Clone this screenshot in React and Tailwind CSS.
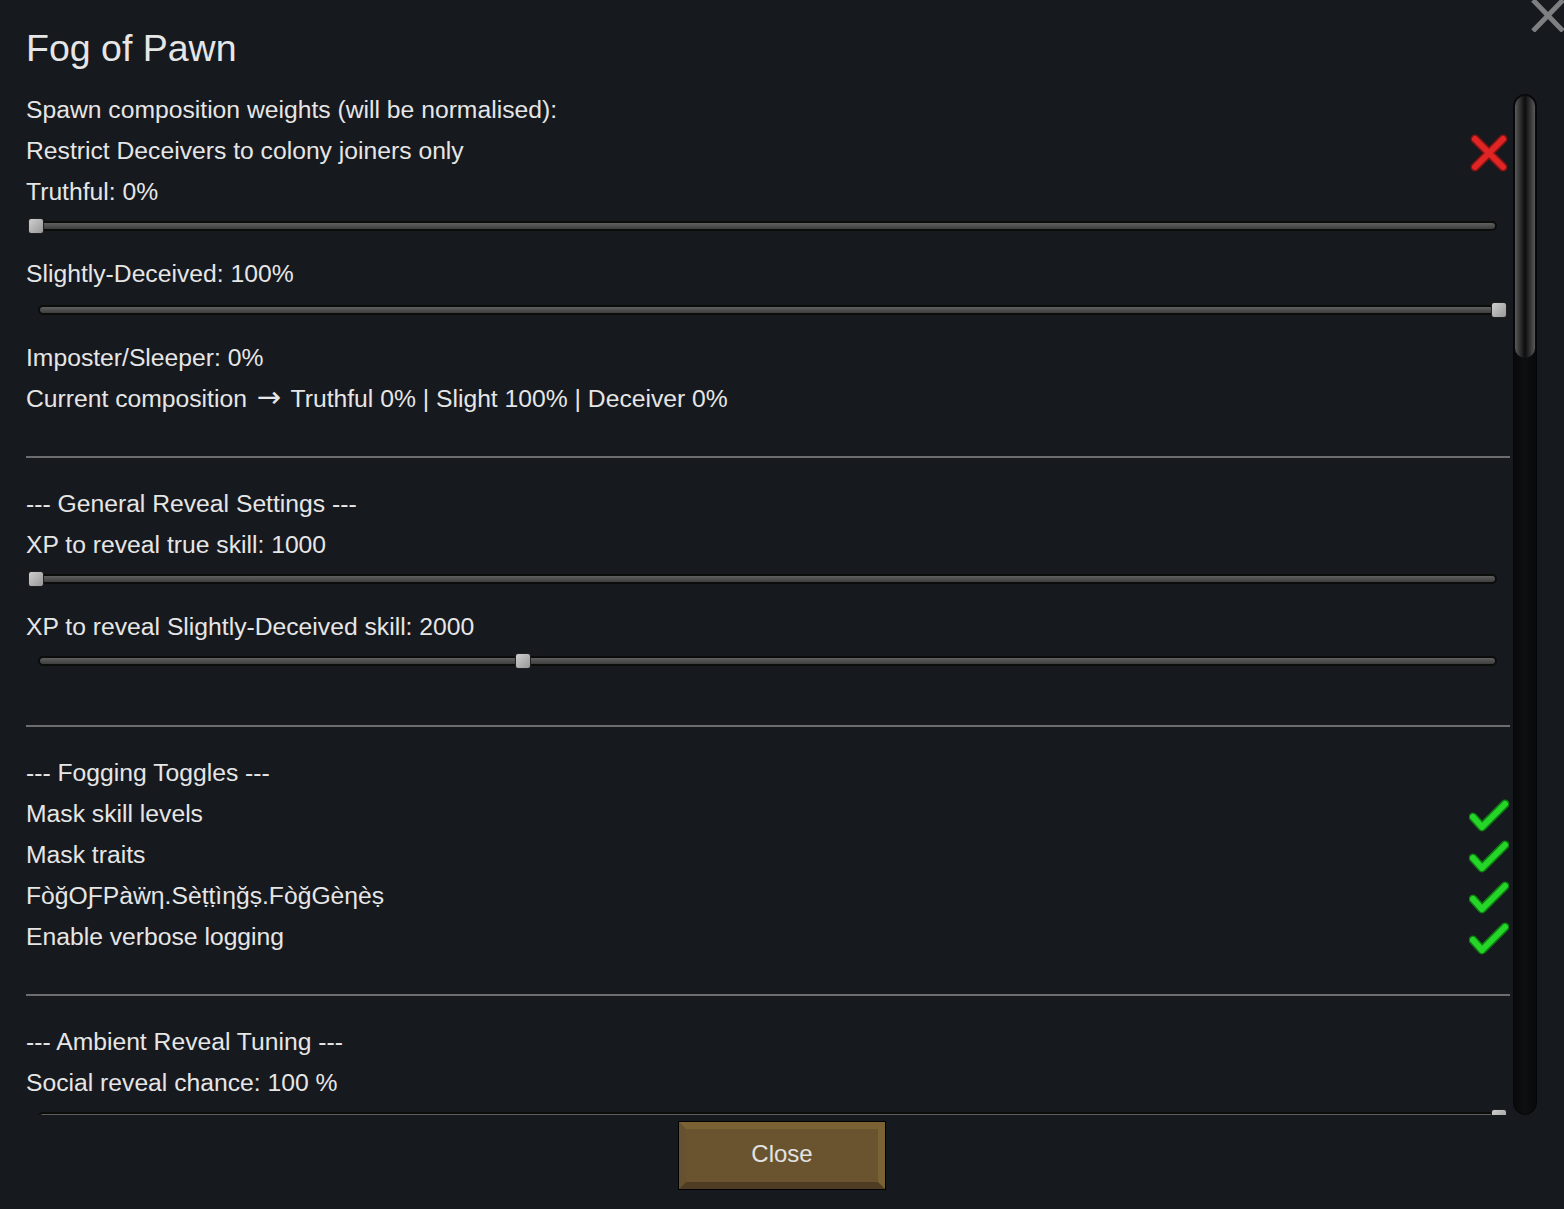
import React from 'react';

const font = { fontFamily: '"Liberation Sans", Arial, "DejaVu Sans", sans-serif' };

function RedCross() {
  return (
    <svg width="38" height="38" viewBox="0 0 38 38" className="mr-[2px] mt-[4px]">
      <g strokeLinecap="round">
        <path d="M5 5 L33 33 M33 5 L5 33" stroke="#7d1414" strokeWidth="9" />
        <path d="M5 5 L33 33 M33 5 L5 33" stroke="#e12525" strokeWidth="6" />
      </g>
    </svg>
  );
}

function GreenCheck() {
  return (
    <svg width="40" height="36" viewBox="0 0 40 36" className="mr-[1px] mt-[6px]">
      <g strokeLinecap="round" strokeLinejoin="round" fill="none">
        <path d="M4 18 L13 28 L36 5" stroke="#0e7a12" strokeWidth="9" />
        <path d="M4 18 L13 28 L36 5" stroke="#25d628" strokeWidth="6" />
      </g>
    </svg>
  );
}

function Row({ children, right }) {
  return (
    <div className="h-[41px] flex items-center justify-between whitespace-nowrap">
      <span className="leading-[41px]">{children}</span>
      {right}
    </div>
  );
}

function Slider({ pct }) {
  return (
    <div className="h-[41px] ml-[2px] mr-[3px] pt-[9px]">
      <div className="relative">
        <div className="mx-[10px] h-[10px] rounded-full border-2 border-[#0b0d0b] bg-gradient-to-b from-[#5f605f] to-[#3d3e3d]" />
        <div
          className="absolute top-[-3px] w-[16px] h-[16px] rounded-[3px] border border-[#202020] bg-gradient-to-br from-[#cfcfcf] to-[#989898]"
          style={{ left: `calc(${pct}% - ${(pct / 100) * 16}px)` }}
        />
      </div>
    </div>
  );
}

function Separator() {
  return <div className="mt-[37px] mb-[25px] h-[2px] bg-[#6c6d6e]" />;
}

export default function App() {
  return (
    <div
      className="w-[1564px] h-[1209px] bg-[#16191e] relative overflow-hidden text-[#e6e6e6]"
      style={font}
    >
      {/* window close X */}
      <svg width="36" height="32" viewBox="0 0 36 32" className="absolute top-0 right-[-2px]">
        <path d="M3 0 L33 31 M33 0 L3 31" stroke="#7d7f81" strokeWidth="5" />
      </svg>

      <div className="h-[89px] pl-[26px] pt-[30px] text-[37.5px] leading-[37px]">Fog of Pawn</div>

      <div className="flex h-[1026px] pl-[26px] text-[24.7px]">
        <div className="w-[1484px] overflow-hidden">
          <Row>Spawn composition weights (will be normalised):</Row>
          <Row right={<RedCross />}>Restrict Deceivers to colony joiners only</Row>
          <Row>Truthful: 0%</Row>
          <Slider pct={0} />
          <Row>Slightly-Deceived: 100%</Row>
          <div className="h-[2px]" />
          <Slider pct={100} />
          <Row>Imposter/Sleeper: 0%</Row>
          <Row>
            Current composition{' '}
            <span style={{ fontFamily: '"DejaVu Sans", sans-serif' }} className="text-[29px] leading-none mx-[3px]">→</span>{' '}
            Truthful 0% | Slight 100% | Deceiver 0%
          </Row>

          <Separator />

          <Row>--- General Reveal Settings ---</Row>
          <Row>XP to reveal true skill: 1000</Row>
          <Slider pct={0} />
          <Row>XP to reveal Slightly-Deceived skill: 2000</Row>
          <Slider pct={33.3} />

          <Separator />

          <Row>--- Fogging Toggles ---</Row>
          <Row right={<GreenCheck />}>Mask skill levels</Row>
          <Row right={<GreenCheck />}>Mask traits</Row>
          <Row right={<GreenCheck />}>FòğOƑPàẅη.Sèṭṭìηğṣ.FòğGèηèṣ</Row>
          <Row right={<GreenCheck />}>Enable verbose logging</Row>

          <Separator />

          <Row>--- Ambient Reveal Tuning ---</Row>
          <Row>Social reveal chance: 100 %</Row>
          <Slider pct={100} />
        </div>

        {/* scrollbar */}
        <div className="ml-[3px] mt-[5px] w-[24px] rounded-full bg-gradient-to-r from-[#08090b] via-[#0d0f11] to-[#08090b] border border-[#050607] p-[1px]">
          <div className="h-[262px] rounded-full bg-gradient-to-r from-[#5a5a5a] via-[#0d0d0d] to-[#5a5a5a]" />
        </div>
      </div>

      <div className="flex justify-center pt-[6px]">
        <div className="w-[208px] h-[69px] border border-black">
          <div className="h-full flex items-center justify-center pb-[3px] bg-[#6a5430] border-t-[7px] border-r-[7px] border-b-[7px] border-l-[7px] border-t-[#7b6234] border-r-[#7b6234] border-b-[#4e3d22] border-l-[#665130] text-[24px] text-[#e2e2e2]">
            Close
          </div>
        </div>
      </div>
    </div>
  );
}
